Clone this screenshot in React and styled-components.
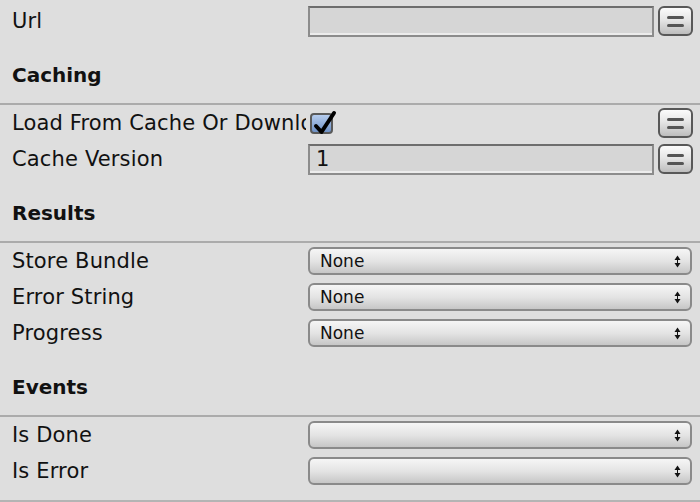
import React from "react";
import styled, { createGlobalStyle } from "styled-components";

const Global = createGlobalStyle`
  html, body { margin: 0; padding: 0; background: #dedede; }
  body { font-family: "DejaVu Sans", "Liberation Sans", sans-serif; }
`;

const Panel = styled.div`
  width: 700px;
  height: 502px;
  overflow: hidden;
  background: #dedede;
  padding-top: 3px;
  box-sizing: border-box;
  color: #111;
`;

const Row = styled.div`
  display: flex;
  align-items: center;
  height: 36px;
  padding: 0 7px 0 12px;
  box-sizing: border-box;
`;

const Label = styled.div`
  width: 294px;
  margin-right: 2px;
  flex: none;
  font-size: 21px;
  letter-spacing: 0.15px;
  white-space: nowrap;
  overflow: hidden;
`;

const Header = styled.div`
  height: 66px;
  box-sizing: border-box;
  padding: 24px 12px 0;
  font-size: 20px;
  line-height: 24px;
  font-weight: bold;
  border-bottom: 2px solid #ababab;
`;

const Bottom = styled.div`
  margin-top: 11px;
  border-top: 2px solid #b4b4b4;
`;

const Field = styled.div`
  flex: 1;
  height: 31px;
  box-sizing: border-box;
  background: #d6d6d6;
  border-top: 2px solid #6e6e6e;
  border-left: 2px solid #8c8c8c;
  border-right: 2px solid #8c8c8c;
  border-bottom: 2px solid #8c8c8c;
  box-shadow: inset 0 -2px 0 #ececec;
  font-size: 21px;
  line-height: 27px;
  padding-left: 6px;
`;

const Spacer = styled.div`
  flex: 1;
`;

const EqButton = styled.div`
  width: 35px;
  height: 30px;
  margin-left: 4px;
  flex: none;
  box-sizing: border-box;
  border: 2px solid #585858;
  border-radius: 6px;
  background: linear-gradient(#fbfbfb, #e6e6e6 45%, #bdbdbd);
  display: flex;
  flex-direction: column;
  align-items: center;
  justify-content: center;
  gap: 5px;
`;

const EqBar = styled.div`
  width: 17px;
  height: 3px;
  border-radius: 2px;
  background: #555;
`;

const CheckBox = styled.div`
  position: relative;
  width: 23px;
  height: 21px;
  margin-left: 2px;
  box-sizing: border-box;
  border: 2px solid #5a5a5a;
  border-radius: 4px;
  background: linear-gradient(#b6cdee, #6e91c6);
`;

const CheckMark = styled.svg`
  position: absolute;
  left: 1px;
  top: -5px;
`;

const Select = styled.div`
  flex: 1;
  height: 28px;
  margin-right: 1px;
  box-sizing: border-box;
  border: 2px solid #8a8a8a;
  border-radius: 6px;
  background: linear-gradient(#f6f6f6, #e4e4e4 50%, #c6c6c6);
  display: flex;
  align-items: center;
  justify-content: space-between;
  padding: 0 9px 0 10px;
  font-size: 17px;
`;

const Arrows = () => (
  <svg width="7" height="13" viewBox="0 0 7 13">
    <path d="M3.5 0.5 L6.5 5 L0.5 5 Z" fill="#111" />
    <path d="M3.5 12.5 L6.5 8 L0.5 8 Z" fill="#111" />
    <rect x="3" y="5" width="1" height="3" fill="#111" />
  </svg>
);

const Eq = () => (
  <EqButton>
    <EqBar />
    <EqBar />
  </EqButton>
);

const Dropdown = ({ value }) => (
  <Select>
    <span>{value}</span>
    <Arrows />
  </Select>
);

export default function App() {
  return (
    <>
      <Global />
      <Panel>
        <Row>
          <Label>Url</Label>
          <Field />
          <Eq />
        </Row>
        <Header>Caching</Header>
        <Row>
          <Label>Load From Cache Or Download</Label>
          <CheckBox>
            <CheckMark width="24" height="26" viewBox="0 0 24 26">
              <path
                d="M3 16 L8.5 22 L21 3"
                fill="none"
                stroke="#000"
                strokeWidth="4"
                strokeLinecap="round"
                strokeLinejoin="round"
              />
            </CheckMark>
          </CheckBox>
          <Spacer />
          <Eq />
        </Row>
        <Row>
          <Label>Cache Version</Label>
          <Field>1</Field>
          <Eq />
        </Row>
        <Header>Results</Header>
        <Row>
          <Label>Store Bundle</Label>
          <Dropdown value="None" />
        </Row>
        <Row>
          <Label>Error String</Label>
          <Dropdown value="None" />
        </Row>
        <Row>
          <Label>Progress</Label>
          <Dropdown value="None" />
        </Row>
        <Header>Events</Header>
        <Row>
          <Label>Is Done</Label>
          <Dropdown value="" />
        </Row>
        <Row>
          <Label>Is Error</Label>
          <Dropdown value="" />
        </Row>
        <Bottom />
      </Panel>
    </>
  );
}
